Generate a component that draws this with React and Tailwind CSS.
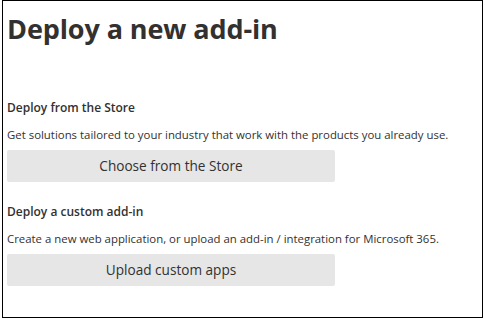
import React from 'react';

const font = { fontFamily: '"Open Sans", "Noto Sans", sans-serif' };

export default function App() {
  return (
    <div className="w-[485px] h-[319px] bg-white" style={font}>
      <div className="ml-[2px] w-[481px] h-[318px] border border-black px-[4px] text-[#323130]">
        <h1 className="mt-[10px] text-[27px] leading-[36px] font-bold text-[#323130] tracking-[-0.1px]">
          Deploy a new add-in
        </h1>

        <section className="mt-[53px]">
          <h2 className="text-[12px] leading-[16px] font-semibold">Deploy from the Store</h2>
          <p className="mt-[11px] text-[11.4px] leading-[16px]">
            Get solutions tailored to your industry that work with the products you already use.
          </p>
          <button className="mt-[7px] w-[328px] h-[32px] rounded-[2px] bg-[#e6e6e6] text-[13.6px] text-[#323130]">
            Choose from the Store
          </button>
        </section>

        <section className="mt-[22px]">
          <h2 className="text-[12px] leading-[16px] font-semibold">Deploy a custom add-in</h2>
          <p className="mt-[11px] text-[11.4px] leading-[16px]">
            Create a new web application, or upload an add-in / integration for Microsoft 365.
          </p>
          <button className="mt-[7px] w-[328px] h-[32px] rounded-[2px] bg-[#e6e6e6] text-[13.6px] text-[#323130]">
            Upload custom apps
          </button>
        </section>
      </div>
    </div>
  );
}
